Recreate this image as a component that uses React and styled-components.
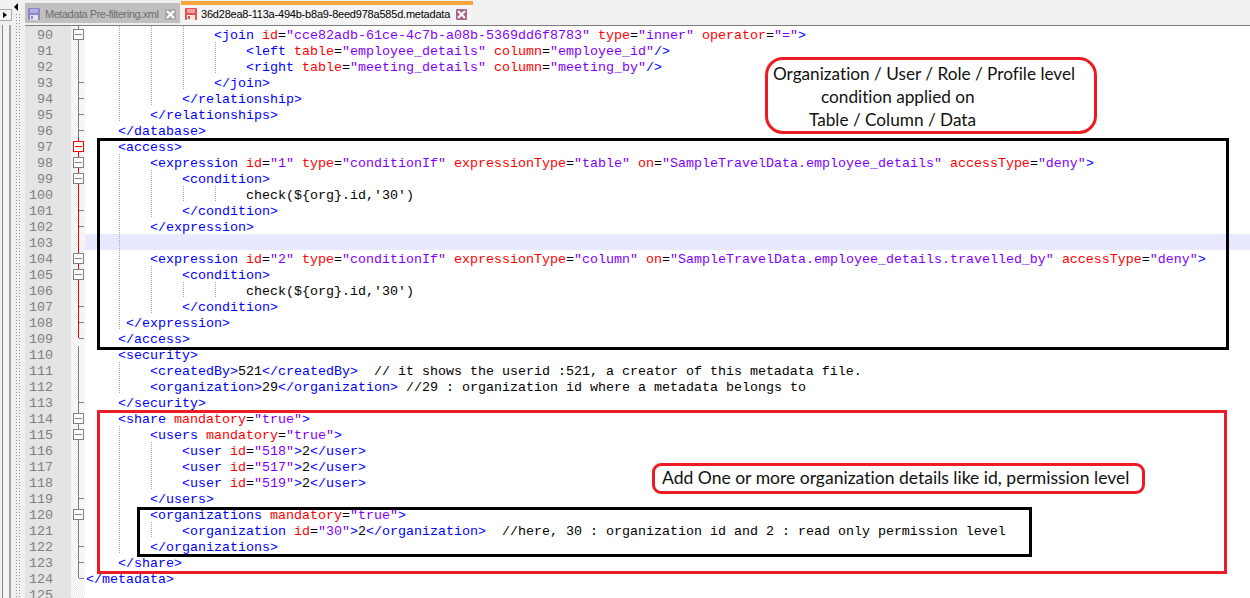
import React from 'react';
import styled, { createGlobalStyle } from 'styled-components';

const GlobalStyle = createGlobalStyle`
  html, body {
    margin: 0;
    padding: 0;
    background: #f0f0f0;
    overflow: hidden;
  }
`;

const SOURCE = [
  '                <join id="cce82adb-61ce-4c7b-a08b-5369dd6f8783" type="inner" operator="=">',
  '                    <left table="employee_details" column="employee_id"/>',
  '                    <right table="meeting_details" column="meeting_by"/>',
  '                </join>',
  '            </relationship>',
  '        </relationships>',
  '    </database>',
  '    <access>',
  '        <expression id="1" type="conditionIf" expressionType="table" on="SampleTravelData.employee_details" accessType="deny">',
  '            <condition>',
  "                    check(${org}.id,'30')",
  '            </condition>',
  '        </expression>',
  '        ',
  '        <expression id="2" type="conditionIf" expressionType="column" on="SampleTravelData.employee_details.travelled_by" accessType="deny">',
  '            <condition>',
  "                    check(${org}.id,'30')",
  '            </condition>',
  '     </expression>',
  '    </access>',
  '    <security>',
  '        <createdBy>521</createdBy>  // it shows the userid :521, a creator of this metadata file.',
  '        <organization>29</organization> //29 : organization id where a metadata belongs to',
  '    </security>',
  '    <share mandatory="true">',
  '        <users mandatory="true">',
  '            <user id="518">2</user>',
  '            <user id="517">2</user>',
  '            <user id="519">2</user>',
  '        </users>',
  '        <organizations mandatory="true">',
  '            <organization id="30">2</organization>  //here, 30 : organization id and 2 : read only permission level',
  '        </organizations>',
  '    </share>',
  '</metadata>',
  '',
];

const FIRST_LINE = 90;
const ACTIVE_LINE = 103;
const BOXES = [90, 97, 98, 99, 104, 105, 114, 115, 120];
const TICKS = [93, 94, 95, 96, 101, 102, 107, 108, 109, 113, 119, 122, 123];

const Page = styled.div`
  width: 1250px;
  height: 598px;
  position: relative;
  overflow: hidden;
  display: flex;
  flex-direction: column;
  background: #f0f0f0;
`;

const TabBar = styled.div`
  height: 25px;
  flex: none;
  display: flex;
  align-items: flex-start;
`;

const DockTools = styled.div`
  width: 25px;
  height: 25px;
  flex: none;
  display: flex;
  align-items: flex-start;
`;

const DockButton = styled.div`
  width: 11px;
  height: 10px;
  margin-top: 9px;
  border: 1px solid #a8a8a8;
  border-left: none;
  background: #f4f4f4;
  display: flex;
  align-items: center;
  justify-content: center;
`;

const DockArrow = styled.svg`
  margin: 3px 0 0 2px;
`;

const Tab = styled.div`
  display: flex;
  align-items: center;
  box-sizing: border-box;
  font-family: "Liberation Sans", Arial, sans-serif;
  font-size: 11px;
  white-space: nowrap;
  width: ${p => (p.$active ? '292px' : '155px')};
  height: ${p => (p.$active ? '24px' : '20px')};
  margin-top: ${p => (p.$active ? '1px' : '3px')};
  margin-left: ${p => (p.$active ? '1px' : '0')};
  padding: ${p => (p.$active ? '0 6px 2px 3px' : '2px 4px 0 2px')};
  color: ${p => (p.$active ? '#000000' : '#6d6d6d')};
  background: ${p => (p.$active ? '#f4f4f4' : '#c0c0c0')};
  border-top: ${p => (p.$active ? '4px solid #f9a53d' : 'none')};
`;

const TabLabel = styled.span`
  flex: 1;
  margin-left: ${p => (p.$active ? '3px' : '4px')};
  letter-spacing: ${p => (p.$active ? '-0.21px' : '-0.46px')};
`;

const CloseBox = styled.span`
  width: 11px;
  height: 11px;
  flex: none;
  display: flex;
  align-items: center;
  justify-content: center;
  background: ${p => (p.$active ? '#a9668a' : '#a8a8a8')};
  border-radius: 1px;
`;

const Workspace = styled.div`
  flex: 1;
  display: flex;
  min-height: 0;
`;

const SidePanel = styled.div`
  width: 25px;
  flex: none;
  display: flex;
  background: #f0f0f0;
`;

const SideFrame = styled.div`
  width: 6px;
  margin-left: 2px;
  border-left: 1px solid #8a8a8a;
  border-right: 2px solid #a4a4a4;
  background: #f4f4f4;
`;

const Grip = styled.div`
  width: 7px;
  margin-left: 4px;
  margin-top: -12px;
  background-image: radial-gradient(#9a9a9a 0 1px, transparent 1px);
  background-size: 3px 3px;
`;

const Editor = styled.div`
  flex: 1;
  min-width: 0;
  border-top: 1px solid #7c7c7c;
  background: #ffffff;
`;

const Row = styled.div`
  display: flex;
  height: 16px;
  font-family: "Liberation Mono", "Courier New", monospace;
  font-size: 13.333px;
  line-height: 20px;
`;

const LineNumber = styled.div`
  width: 46px;
  flex: none;
  box-sizing: border-box;
  padding-right: 18px;
  text-align: right;
  color: #808080;
  background: #e4e4e4;
`;

const FoldCell = styled.div`
  width: 14px;
  height: 16px;
  flex: none;
  background: repeating-conic-gradient(#ececec 0 25%, #ffffff 0 50%) 0 0 / 2px 2px;
`;

const Code = styled.div`
  flex: 1;
  display: flex;
  padding-left: 1px;
  white-space: pre;
  background: ${p => (p.$active ? '#e8e8ff' : '#ffffff')};
`;

const IndentBlank = styled.span`
  width: 32px;
  flex: none;
`;

const IndentGuide = styled.span`
  flex: none;
  width: ${p => p.$cols * 8}px;
  background-image: repeating-linear-gradient(to bottom, #a8a8a8 0 1px, transparent 1px 2px);
  background-size: 1px 100%;
  background-position: 1px 0;
  background-repeat: no-repeat;
`;

const Token = styled.span`
  color: ${p => p.$color};
`;

const Frame = styled.div`
  position: absolute;
  box-sizing: border-box;
  left: ${p => p.$x}px;
  top: ${p => p.$y}px;
  width: ${p => p.$w}px;
  height: ${p => p.$h}px;
  border: 3px solid ${p => p.$color};
  pointer-events: none;
`;

const Note = styled.div`
  position: absolute;
  box-sizing: border-box;
  left: ${p => p.$x}px;
  top: ${p => p.$y}px;
  width: ${p => p.$w}px;
  height: ${p => p.$h}px;
  border: 3px solid #ed1c24;
  border-radius: ${p => p.$radius}px;
  background: #ffffff;
  padding: ${p => p.$pad};
  font-family: Lato, "Open Sans", sans-serif;
  font-size: ${p => p.$size}px;
  font-variant-ligatures: none;
  line-height: 23px;
  color: #111111;
  white-space: nowrap;
`;

const NoteLine = styled.div`
  margin-left: ${p => p.$indent || 0}px;
`;

const COLORS = {
  tag: '#0000ff',
  attr: '#ff0000',
  value: '#8000ff',
  plain: '#000000',
};

// splits one line into coloured pieces, notepad++ xml style
function tokenize(text) {
  const out = [];
  const tagRe = /<[^>]*>/g;
  let last = 0;
  let m;
  while ((m = tagRe.exec(text))) {
    if (m.index > last) out.push(['plain', text.slice(last, m.index)]);
    const inner = m[0];
    const head = inner.match(/^<\/?[\w]+/);
    out.push(['tag', head[0]]);
    const attrRe = /(\s+)([\w]+)(=)("[^"]*")/g;
    let pos = head[0].length;
    let a;
    while ((a = attrRe.exec(inner))) {
      out.push(['plain', a[1]]);
      out.push(['attr', a[2]]);
      out.push(['plain', a[3]]);
      out.push(['value', a[4]]);
      pos = a.index + a[0].length;
    }
    out.push(['tag', inner.slice(pos)]);
    last = m.index + inner.length;
  }
  if (last < text.length) out.push(['plain', text.slice(last)]);
  return out;
}

const FoldMark = ({ line }) => {
  const isBox = BOXES.includes(line);
  const isTick = TICKS.includes(line);
  const redBlock = line >= 97 && line <= 109;
  const stem = redBlock ? '#ff0000' : '#808080';
  const bottom = line === 124 || line === 109 ? 8 : 16;
  const box = line === 97 ? '#ff0000' : '#808080';
  if (line > 124) return null;
  return (
    <svg width="14" height="16" shapeRendering="crispEdges" style={{ display: 'block' }}>
      <line x1="7.5" x2="7.5" y1="0" y2={bottom} stroke={stem} />
      {(isTick || line === 124) && <line x1="7.5" x2="13" y1="8.5" y2="8.5" stroke="#808080" />}
      {isBox && (
        <g>
          <rect x="2.5" y="3.5" width="10" height="10" fill="#ffffff" stroke={box} />
          <line x1="4" x2="11" y1="8.5" y2="8.5" stroke={box} />
        </g>
      )}
    </svg>
  );
};

const CodeLine = ({ line, text }) => {
  const spaces = text.match(/^ */)[0].length;
  const body = text.slice(spaces);
  const guides = [];
  for (let col = 4; col < spaces; col += 4) {
    guides.push(<IndentGuide key={col} $cols={Math.min(4, spaces - col)} />);
  }
  return (
    <Row>
      <LineNumber>{line}</LineNumber>
      <FoldCell>
        <FoldMark line={line} />
      </FoldCell>
      <Code $active={line === ACTIVE_LINE}>
        {spaces >= 4 && <IndentBlank />}
        {guides}
        <span>
          {tokenize(body).map(([kind, value], i) => (
            <Token key={i} $color={COLORS[kind]}>{value}</Token>
          ))}
        </span>
      </Code>
    </Row>
  );
};

const Floppy = ({ color, light }) => (
  <svg width="14" height="14" viewBox="0 0 14 14" style={{ flex: 'none' }}>
    <rect x="1" y="1" width="12" height="12" rx="1" fill={color} />
    <rect x="3" y="2" width="8" height="4" fill={light} />
    <rect x="3" y="8" width="8" height="5" fill="#e8e8e8" />
    <rect x="4" y="9" width="2" height="3" fill={color} />
  </svg>
);

const CloseIcon = () => (
  <svg width="9" height="9" viewBox="0 0 9 9">
    <path d="M1 1l7 7M8 1l-7 7" stroke="#ffffff" strokeWidth="2" />
  </svg>
);

export default function App() {
  return (
    <Page>
      <GlobalStyle />
      <TabBar>
        <DockTools>
          <DockButton>
            <svg width="5" height="6" viewBox="0 0 5 6"><path d="M0 0l4 3-4 3z" fill="#000000" /></svg>
          </DockButton>
          <DockArrow width="5" height="8" viewBox="0 0 5 8"><path d="M4 0v8L0 4z" fill="#000000" /></DockArrow>
        </DockTools>
        <Tab>
          <Floppy color="#8a86cc" light="#b4b0e0" />
          <TabLabel>Metadata Pre-filtering.xml</TabLabel>
          <CloseBox><CloseIcon /></CloseBox>
        </Tab>
        <Tab $active>
          <Floppy color="#e8504f" light="#f5a0a0" />
          <TabLabel $active>36d28ea8-113a-494b-b8a9-8eed978a585d.metadata</TabLabel>
          <CloseBox $active><CloseIcon /></CloseBox>
        </Tab>
      </TabBar>
      <Workspace>
        <SidePanel>
          <SideFrame />
          <Grip />
        </SidePanel>
        <Editor>
          {SOURCE.map((text, i) => (
            <CodeLine key={i} line={FIRST_LINE + i} text={text} />
          ))}
        </Editor>
      </Workspace>

      <Frame $x={97} $y={138} $w={1132} $h={212} $color="#000000" />
      <Frame $x={97} $y={410} $w={1130} $h={164} $color="#ed1c24" />
      <Frame $x={137} $y={507} $w={895} $h={50} $color="#000000" />

      <Note $x={765} $y={57} $w={332} $h={77} $radius={18} $size={17.2} $pad="2px 0 0 5px">
        <NoteLine>Organization / User / Role / Profile level</NoteLine>
        <NoteLine $indent={48}>condition applied on</NoteLine>
        <NoteLine $indent={36}>Table / Column / Data</NoteLine>
      </Note>
      <Note $x={652} $y={463} $w={493} $h={31} $radius={9} $size={17.55} $pad="0 0 0 7px">
        <NoteLine>Add One or more organization details like id, permission level</NoteLine>
      </Note>
    </Page>
  );
}
